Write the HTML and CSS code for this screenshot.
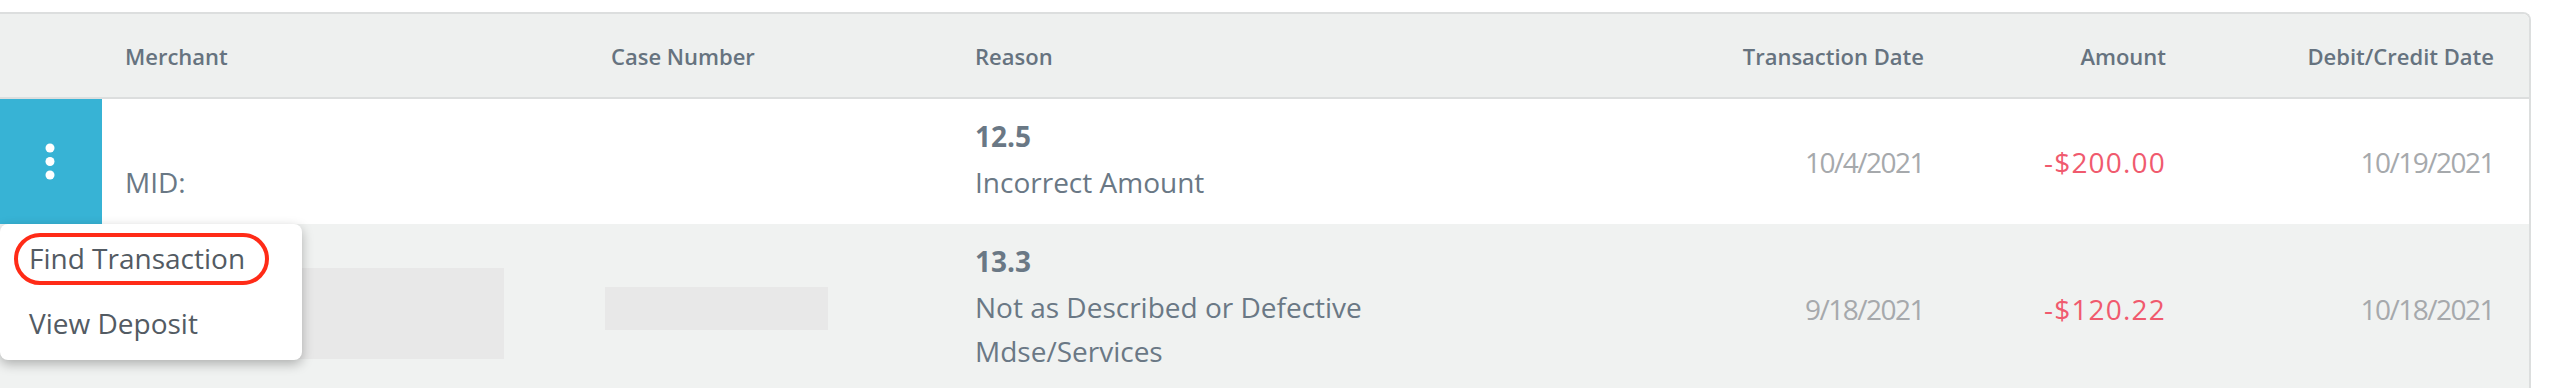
FILE: index.html
```html
<!DOCTYPE html>
<html lang="en">
<head>
<meta charset="utf-8">
<title>Disputes</title>
<link rel="stylesheet" href="styles.css">
</head>
<body>
<div class="page">
  <div class="table">
    <div class="row head">
      <div class="cell"></div>
      <div class="cell">Merchant</div>
      <div class="cell">Case Number</div>
      <div class="cell">Reason</div>
      <div class="cell right">Transaction Date</div>
      <div class="cell right">Amount</div>
      <div class="cell right last">Debit/Credit Date</div>
    </div>

    <div class="row">
      <div class="cell action active">
        <svg class="kebab" width="10" height="38" viewBox="0 0 10 38" aria-hidden="true">
          <circle cx="5" cy="5" r="4.5" fill="#ffffff"/>
          <circle cx="5" cy="18.5" r="4.5" fill="#ffffff"/>
          <circle cx="5" cy="32" r="4.5" fill="#ffffff"/>
        </svg>
        <div class="menu">
          <div class="menu-item highlighted">Find Transaction<span class="ring"></span></div>
          <div class="menu-item">View Deposit</div>
        </div>
      </div>
      <div class="cell stack">
        <div class="line-blank"></div>
        <div class="line">MID:</div>
      </div>
      <div class="cell stack"></div>
      <div class="cell stack">
        <div class="code">12.5</div>
        <div class="line">Incorrect Amount</div>
      </div>
      <div class="cell right date">10/4/2021</div>
      <div class="cell right amount">-$200.00</div>
      <div class="cell right last date">10/19/2021</div>
    </div>

    <div class="row alt">
      <div class="cell action"></div>
      <div class="cell stack">
        <div class="redact merchant-redact"></div>
      </div>
      <div class="cell">
        <div class="redact case-redact"></div>
      </div>
      <div class="cell stack">
        <div class="code">13.3</div>
        <div class="line">Not as Described or Defective Mdse/Services</div>
      </div>
      <div class="cell right date">9/18/2021</div>
      <div class="cell right amount">-$120.22</div>
      <div class="cell right last date">10/18/2021</div>
    </div>
  </div>
</div>
</body>
</html>
```

FILE: styles.css
```css
* { box-sizing: border-box; }

html, body {
  margin: 0;
  padding: 0;
  background: #ffffff;
  overflow: hidden;
}

body {
  font-family: "Open Sans", "Liberation Sans", sans-serif;
  color: #6a7885;
}

.page {
  padding-top: 12px;
}

.table {
  width: 2531px;
  border: 2px solid #dcdede;
  border-left: 0;
  border-bottom: 0;
  border-radius: 0 8px 0 0;
}

.row {
  display: grid;
  grid-template-columns: 102px 486px 364px 520px 475px 242px 1fr;
  background: #ffffff;
}

.row.alt {
  background: #f0f2f1;
}

.row.head {
  background: #eef0ef;
  height: 85px;
  border-bottom: 2px solid #dcdede;
  border-radius: 0 6px 0 0;
}

.cell {
  display: flex;
  flex-direction: column;
  justify-content: center;
  padding: 0 23px;
  font-size: 28px;
  line-height: 44px;
  white-space: nowrap;
}

.head .cell {
  font-size: 22px;
  font-weight: 600;
  line-height: 30px;
  color: #66737f;
}

.cell.right {
  align-items: flex-end;
  text-align: right;
}

.cell.last {
  padding-right: 35px;
}

.cell.stack {
  justify-content: flex-start;
  padding-top: 15px;
  padding-bottom: 20px;
  white-space: normal;
}

.code {
  font-weight: 700;
  margin-bottom: 2px;
}

.line-blank {
  height: 46px;
}

.line {
  max-width: 480px;
}

.date {
  color: #a6a9ac;
  letter-spacing: -1.5px;
}

.amount {
  color: #f05a6e;
  letter-spacing: 1.2px;
}

.action {
  position: relative;
  padding: 0;
  align-items: center;
}

.action.active {
  background: #37b3d5;
}

.kebab {
  display: block;
  margin-left: -2px;
}

.menu {
  position: absolute;
  top: 100%;
  left: 0;
  z-index: 10;
  width: 302px;
  padding: 2px 0 4px;
  background: #ffffff;
  border-radius: 8px;
  box-shadow: 0 4px 12px rgba(0, 0, 0, 0.28);
}

.menu-item {
  position: relative;
  padding: 11px 29px;
  font-size: 28px;
  line-height: 43px;
  color: #535b63;
  white-space: nowrap;
}

.ring {
  position: absolute;
  left: 14px;
  top: 7px;
  width: 255px;
  height: 52px;
  border: 4px solid #ff2b17;
  border-radius: 26px;
}

.redact {
  background: #e8e8e8;
}

.merchant-redact {
  width: 379px;
  height: 91px;
  margin-top: 29px;
}

.case-redact {
  width: 223px;
  height: 43px;
  margin-left: -6px;
}
```
